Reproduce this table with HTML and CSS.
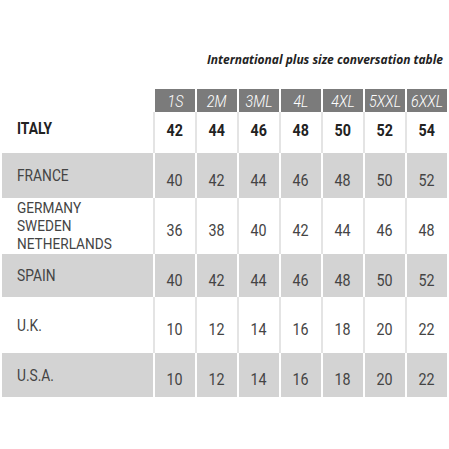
FILE: index.html
```html
<!DOCTYPE html>
<html>
<head>
  <meta charset="UTF-8">
  <title>Size table</title>
  <link rel="stylesheet" href="styles.css">
</head>
<body>
  <div class="page">
    <div class="caption">International plus size conversation table</div>

    <div class="size-table">
      <div class="row head">
        <div class="label"></div>
        <div class="cell"><span>1S</span></div>
        <div class="cell"><span>2M</span></div>
        <div class="cell"><span>3ML</span></div>
        <div class="cell"><span>4L</span></div>
        <div class="cell"><span>4XL</span></div>
        <div class="cell"><span>5XXL</span></div>
        <div class="cell"><span>6XXL</span></div>
      </div>

      <div class="row light italy">
        <div class="label"><span>ITALY</span></div>
        <div class="cell"><span>42</span></div>
        <div class="cell"><span>44</span></div>
        <div class="cell"><span>46</span></div>
        <div class="cell"><span>48</span></div>
        <div class="cell"><span>50</span></div>
        <div class="cell"><span>52</span></div>
        <div class="cell"><span>54</span></div>
      </div>

      <div class="row dark r45">
        <div class="label"><span>FRANCE</span></div>
        <div class="cell"><span>40</span></div>
        <div class="cell"><span>42</span></div>
        <div class="cell"><span>44</span></div>
        <div class="cell"><span>46</span></div>
        <div class="cell"><span>48</span></div>
        <div class="cell"><span>50</span></div>
        <div class="cell"><span>52</span></div>
      </div>

      <div class="row light r56">
        <div class="label multi">
          <span>GERMANY</span>
          <span>SWEDEN</span>
          <span>NETHERLANDS</span>
        </div>
        <div class="cell"><span>36</span></div>
        <div class="cell"><span>38</span></div>
        <div class="cell"><span>40</span></div>
        <div class="cell"><span>42</span></div>
        <div class="cell"><span>44</span></div>
        <div class="cell"><span>46</span></div>
        <div class="cell"><span>48</span></div>
      </div>

      <div class="row dark r43">
        <div class="label"><span>SPAIN</span></div>
        <div class="cell"><span>40</span></div>
        <div class="cell"><span>42</span></div>
        <div class="cell"><span>44</span></div>
        <div class="cell"><span>46</span></div>
        <div class="cell"><span>48</span></div>
        <div class="cell"><span>50</span></div>
        <div class="cell"><span>52</span></div>
      </div>

      <div class="row light r56">
        <div class="label"><span>U.K.</span></div>
        <div class="cell"><span>10</span></div>
        <div class="cell"><span>12</span></div>
        <div class="cell"><span>14</span></div>
        <div class="cell"><span>16</span></div>
        <div class="cell"><span>18</span></div>
        <div class="cell"><span>20</span></div>
        <div class="cell"><span>22</span></div>
      </div>

      <div class="row dark r44">
        <div class="label"><span>U.S.A.</span></div>
        <div class="cell"><span>10</span></div>
        <div class="cell"><span>12</span></div>
        <div class="cell"><span>14</span></div>
        <div class="cell"><span>16</span></div>
        <div class="cell"><span>18</span></div>
        <div class="cell"><span>20</span></div>
        <div class="cell"><span>22</span></div>
      </div>
    </div>
  </div>
</body>
</html>
```

FILE: styles.css
```css
body {
  margin: 0;
  background: white;
  font-family: Roboto, "Liberation Sans", sans-serif;
  color: #444;
}

.page {
  width: 449px;
  height: 449px;
  padding: 52px 2px 0 2px;
  box-sizing: border-box;
}

/* 标题 */
.caption {
  font-family: "Open Sans", sans-serif;
  font-weight: bold;
  font-style: italic;
  font-size: 12px;
  line-height: 15px;
  color: #222;
  text-align: right;
  padding-right: 4px;
  margin-bottom: 22px;
}

/* 表格 */
.row {
  display: grid;
  grid-template-columns: 151px repeat(7, 1fr);
  column-gap: 2px;
  background: white;
}

.label {
  display: flex;
  align-items: center;
  padding-left: 15px;
  font-size: 16px;
  line-height: 17px;
}

.label span {
  display: inline-block;
  transform: scaleX(0.86);
  transform-origin: left center;
}

/* 多行国家 */
.label.multi {
  flex-direction: column;
  align-items: flex-start;
  justify-content: center;
  font-size: 15.5px;
  line-height: 18px;
}

.label.multi span {
  transform: scaleX(0.88);
}

.cell {
  display: flex;
  align-items: center;
  justify-content: center;
  padding-top: 8px;
  font-size: 17px;
}

/* 窄字体效果 */
.cell span {
  display: inline-block;
  transform: scaleX(0.84);
}

/* 表头 */
.head {
  height: 23px;
}

.head .cell {
  background: #7b7b7b;
  color: white;
  font-style: italic;
  font-weight: 300;
  padding-top: 0;
  font-size: 17px;
}

.light {
  background: #e4e4e4;
}

.light .label,
.light .cell {
  background: white;
}

.dark .label,
.dark .cell {
  background: #d3d3d3;
}

.italy {
  height: 41px;
}

.italy .label {
  font-weight: bold;
  color: #222;
  padding-bottom: 8px;
}

.italy .cell {
  font-weight: bold;
  color: #222;
  padding-top: 0;
  padding-bottom: 5px;
}

.r45 { height: 45px; }
.r56 { height: 56px; }
.r43 { height: 43px; }
.r44 { height: 44px; }
```
